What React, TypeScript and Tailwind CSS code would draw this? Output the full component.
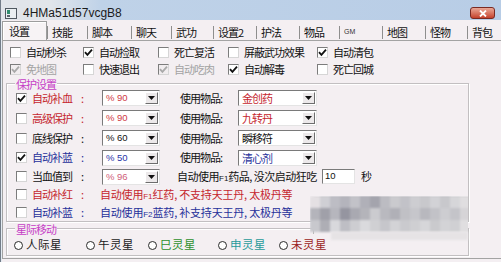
import React from "react";

const RED = "text-[#c5262e]";
const BLUE = "text-[#26309a]";

function Box({ on, off }: { on?: boolean; off?: boolean }) {
  return (
    <span
      className={`flex h-[11px] w-[11px] shrink-0 items-center justify-center border border-t-[#7c7c7c] border-l-[#7c7c7c] border-r-[#d6d6d6] border-b-[#d6d6d6] ${
        off ? "bg-[#f1edef]" : "bg-white"
      }`}
    >
      {on && (
        <svg width="9" height="9" viewBox="0 0 9 9">
          <path d="M1 4.2 L3.4 6.8 L8 1.6" fill="none" stroke={off ? "#a9a9a9" : "#111"} strokeWidth="1.8" />
        </svg>
      )}
    </span>
  );
}

function Arrow() {
  return (
    <span className="m-px flex w-[13px] items-center justify-center border border-t-white border-l-white border-r-[#6d6d6d] border-b-[#6d6d6d] bg-[#ece9ea]">
      <svg width="7" height="4" viewBox="0 0 7 4">
        <path d="M0 0 H7 L3.5 4 Z" fill="#111" />
      </svg>
    </span>
  );
}

function Combo({ text, cls, width, cn }: { text: string; cls: string; width: string; cn?: boolean }) {
  return (
    <div className={`flex h-[16px] shrink-0 border border-t-[#7a7a7a] border-l-[#7a7a7a] border-r-[#e4e4e4] border-b-[#e4e4e4] bg-white ${width}`}>
      <span
        className={`flex-1 pl-[3px] ${
          cn ? "text-[11px] leading-[14px] tracking-[-1px]" : "font-['Liberation_Sans',sans-serif] text-[9.5px] leading-[14px]"
        } ${cls}`}
      >
        {text}
      </span>
      <Arrow />
    </div>
  );
}

function TopCheck({ label, on, off, w }: { label: string; on?: boolean; off?: boolean; w: string }) {
  return (
    <div className={`flex shrink-0 items-center gap-[5px] ${w}`}>
      <Box on={on} off={off} />
      <span className={`text-[11px] leading-[14px] tracking-[-1px] ${off ? "text-[#a3a3a3]" : "text-[#111]"}`}>{label}</span>
    </div>
  );
}

function Label({ on, text, cls }: { on?: boolean; text: string; cls: string }) {
  return (
    <div className="flex w-[86px] shrink-0 items-center gap-[5px]">
      <Box on={on} />
      <span className={`text-[11px] tracking-[-1px] ${cls}`}>{text}</span>
      <span className={`ml-[4px] text-[11px] ${cls}`}>:</span>
    </div>
  );
}

function Radio({ text, cls, w }: { text: string; cls: string; w: string }) {
  return (
    <div className={`flex shrink-0 items-center gap-[3px] ${w}`}>
      <span className="h-[9px] w-[9px] rounded-full border-[1.5px] border-[#2b2b2b] bg-white" />
      <span className={`text-[11.5px] tracking-[0.5px] ${cls}`}>{text}</span>
    </div>
  );
}

const tabs: [string, string][] = [
  ["技能", "w-[40px]"],
  ["脚本", "w-[44px]"],
  ["聊天", "w-[40px]"],
  ["武功", "w-[42px]"],
  ["设置2", "w-[43px]"],
  ["护法", "w-[43px]"],
  ["物品", "w-[40px]"],
  ["GM", "w-[43px]"],
  ["地图", "w-[43px]"],
  ["怪物", "w-[42px]"],
  ["背包", "w-[40px]"],
];

const mosaic = [
  ["#e4e0e3", "#cfcfd4", "#bdbdc4", "#b4b4bc", "#c2c2c8", "#b0b0b8", "#a4a4ad", "#bcbcc2", "#cacace", "#c2c2c8", "#cdcdd1", "#c8c8cc", "#d2d2d6", "#c8c8cc", "#d6d6d9", "#e0dee0"],
  ["#b4b4bb", "#a0a0a9", "#b6b6bd", "#9595a0", "#a9a9b1", "#b4b4ba", "#cbcbcf", "#b9b9bf", "#b0b0b7", "#c0c0c5", "#c6c6cb", "#b8b8be", "#c2c2c7", "#cdcdd1", "#c4c4c9", "#d6d4d7"],
  ["#c8c8cd", "#aeaeb5", "#d8d8dc", "#bebec4", "#cdcdd1", "#dadadd", "#d0d0d3", "#c6c6cb", "#d3d3d6", "#cacace", "#cfcfd2", "#d6d6d9", "#cacacd", "#d3d3d6", "#d0d0d3", "#e0dee0"],
];

export default function App() {
  return (
    <div className="relative h-[262px] w-[501px] overflow-hidden border-l border-[#737d89] bg-[#f4eff2] font-['Noto_Sans_CJK_SC','Noto_Sans',sans-serif] text-[#111]">
      {/* title bar */}
      <div className="flex h-[20px] items-center bg-linear-to-r from-[#e1e5ea] from-10% via-[#bfd2e8] via-20% to-[#b8cde6] pt-[6px]">
        <svg className="ml-[4px]" width="12" height="11" viewBox="0 0 12 11">
          <rect x="0.5" y="0.5" width="11" height="10" fill="#e9eef1" stroke="#4f5860" />
          <rect x="2" y="2" width="3" height="4" fill="#2f8d6e" />
          <rect x="2" y="7" width="3" height="2" fill="#5a646c" />
        </svg>
        <span className="ml-[6px] font-['Liberation_Sans',sans-serif] text-[12px] leading-none text-[#1b1b1b]">
          4HMa51d57vcgB8
        </span>
        <div className="ml-auto mr-[6px] flex h-[12px] w-[25px] items-center justify-center rounded-[3px] border border-[#7a2a22] bg-linear-to-b from-[#e9a797] to-[#c4402b]">
          <svg width="8" height="7" viewBox="0 0 8 7">
            <path d="M1 0.5 L7 6.5 M7 0.5 L1 6.5" stroke="#fff" strokeWidth="1.8" />
          </svg>
        </div>
      </div>

      <div className="flex h-[242px] border-r-[2px] border-[#9ccbe8] bg-[#e4ebf2] pl-px">
        <div className="flex flex-1 flex-col bg-[#f4eff2]">
          {/* tabs */}
          <div className="flex h-[20px] items-start text-[11px] tracking-[-1px]">
            <div className="mt-px flex h-[20px] w-[45px] shrink-0 items-center border border-b-0 border-[#9d9d9d] bg-[#f7f3f5] pl-[6px] shadow-[inset_1px_1px_0_#fff]">
              设置
            </div>
            {tabs.map(([t, w]) => (
              <div key={t} className={`flex h-[20px] shrink-0 items-end ${w}`}>
                <div className="mb-[1px] flex h-[13px] items-center border-l border-[#8e8e8e] pl-[4px]">
                  {t === "GM" ? (
                    <span className="font-['Liberation_Sans',sans-serif] text-[7px] tracking-normal text-[#333]">GM</span>
                  ) : (
                    t
                  )}
                </div>
              </div>
            ))}
          </div>

          {/* panel */}
          <div className="flex flex-1 flex-col border-t border-l border-b border-[#a3a3a3] pl-[3px] pt-[3px]">
            <div className="flex h-[16px] items-center pl-[4px]">
              <TopCheck w="w-[73px]" label="自动秒杀" />
              <TopCheck w="w-[75px]" label="自动捡取" on />
              <TopCheck w="w-[70px]" label="死亡复活" />
              <TopCheck w="w-[89px]" label="屏蔽武功效果" />
              <TopCheck w="w-[80px]" label="自动清包" on />
            </div>
            <div className="mt-px flex h-[16px] items-center pl-[4px]">
              <TopCheck w="w-[73px]" label="免地图" on off />
              <TopCheck w="w-[75px]" label="快速退出" />
              <TopCheck w="w-[70px]" label="自动吃肉" on off />
              <TopCheck w="w-[89px]" label="自动解毒" on />
              <TopCheck w="w-[80px]" label="死亡回城" />
            </div>

            {/* 保护设置 */}
            <div className="relative mt-[6px] h-[139px] w-[463px] border border-[#c2bfc1] pl-[9px] pt-[4px] shadow-[inset_1px_1px_0_#fff,1px_1px_0_#fff]">
              <span className="absolute -top-[6px] left-[8px] bg-[#f4eff2] px-[1px] text-[11px] leading-[12px] tracking-[-1px] text-[#c63ec6]">
                保护设置
              </span>
              <div className="flex h-[20px] items-center">
                <Label on text="自动补血" cls={RED} />
                <Combo text="% 90" cls="text-[#cf3a45]" width="w-[58px]" />
                <span className="ml-[20px] w-[58px] text-[11px] tracking-[-1px]">使用物品:</span>
                <Combo text="金创药" cls={RED} width="w-[79px]" cn />
              </div>
              <div className="flex h-[20px] items-center">
                <Label text="高级保护" cls={RED} />
                <Combo text="% 90" cls="text-[#cf3a45]" width="w-[58px]" />
                <span className="ml-[20px] w-[58px] text-[11px] tracking-[-1px]">使用物品:</span>
                <Combo text="九转丹" cls={RED} width="w-[79px]" cn />
              </div>
              <div className="flex h-[20px] items-center">
                <Label text="底线保护" cls="text-[#111]" />
                <Combo text="% 60" cls="text-[#111]" width="w-[58px]" />
                <span className="ml-[20px] w-[58px] text-[11px] tracking-[-1px]">使用物品:</span>
                <Combo text="瞬移符" cls="text-[#111]" width="w-[79px]" cn />
              </div>
              <div className="flex h-[19px] items-center">
                <Label on text="自动补蓝" cls={BLUE} />
                <Combo text="% 50" cls="text-[#2a35a8]" width="w-[58px]" />
                <span className="ml-[20px] w-[58px] text-[11px] tracking-[-1px]">使用物品:</span>
                <Combo text="清心剂" cls={BLUE} width="w-[79px]" cn />
              </div>
              <div className="flex h-[19px] items-center">
                <Label text="当血值到" cls="text-[#111]" />
                <Combo text="% 96" cls="text-[#d0607a]" width="w-[58px]" />
                <span className="ml-[17px] text-[11px] tracking-[-0.5px]">
                  自动使用<span className="font-['Liberation_Sans',sans-serif] text-[8px] tracking-normal">F1</span>药品, 没次启动狂吃
                </span>
                <div className="ml-[5px] flex h-[15px] w-[33px] items-center border border-t-[#7a7a7a] border-l-[#7a7a7a] border-r-[#e4e4e4] border-b-[#e4e4e4] bg-white pl-[2px] font-['Liberation_Sans',sans-serif] text-[9.5px]">
                  10
                </div>
                <span className="ml-[6px] text-[11px]">秒</span>
              </div>
              <div className="flex h-[17px] items-center">
                <Label text="自动补红" cls={RED} />
                <span className={`ml-[-2px] text-[11px] tracking-[-0.2px] ${RED}`}>
                  自动使用<span className="font-['Liberation_Sans',sans-serif] text-[8px] tracking-normal">F1</span>红药, 不支持天王丹, 太极丹等
                </span>
              </div>
              <div className="flex h-[18px] items-center">
                <Label text="自动补蓝" cls={BLUE} />
                <span className={`ml-[-2px] text-[11px] tracking-[-0.2px] ${BLUE}`}>
                  自动使用<span className="font-['Liberation_Sans',sans-serif] text-[8px] tracking-normal">F2</span>蓝药, 补支持天王丹, 太极丹等
                </span>
              </div>
            </div>

            {/* 星际移动 */}
            <div className="relative mt-[6px] flex h-[28px] w-[463px] items-center border border-[#c2bfc1] pl-[7px] pt-[6px] shadow-[inset_1px_1px_0_#fff,1px_1px_0_#fff]">
              <span className="absolute -top-[6px] left-[8px] bg-[#f4eff2] px-[1px] text-[11px] leading-[12px] tracking-[-1px] text-[#c63ec6]">
                星际移动
              </span>
              <Radio text="人际星" cls="text-[#1a1a1a]" w="w-[72px]" />
              <Radio text="午灵星" cls="text-[#1a1a1a]" w="w-[62px]" />
              <Radio text="巳灵星" cls="text-[#2d8f2d]" w="w-[70px]" />
              <Radio text="申灵星" cls="text-[#1f9a9a]" w="w-[61px]" />
              <Radio text="未灵星" cls="text-[#9b2323]" w="w-[70px]" />
            </div>
          </div>
          <div className="h-[3px]" />
        </div>
      </div>

      {/* blurred watermark */}
      <div className="absolute left-[309px] top-[196px] h-[38px] w-[158px] overflow-hidden">
        <div className="absolute left-[3px] top-[1px] h-[60px] w-[170px] rounded-tl-[3px] border-t border-l border-[#b8b8b8]" />
        <div className="grid grid-cols-[repeat(16,10px)] blur-[1px]">
          {mosaic.flat().map((c, i) => (
            <div key={i} className="h-[12px]" style={{ backgroundColor: c }} />
          ))}
        </div>
      </div>
      <div className="absolute left-[330px] top-[232px] h-[8px] w-[137px] bg-[#e6e3e5] blur-[1px]" />
    </div>
  );
}
